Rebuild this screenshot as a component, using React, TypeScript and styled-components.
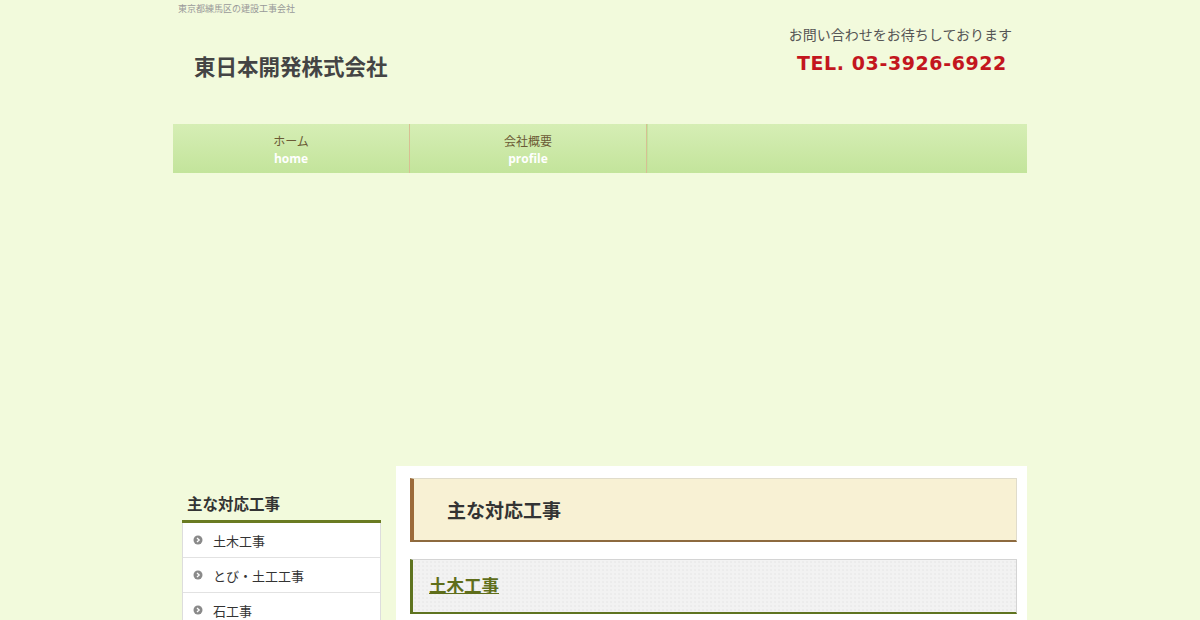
import styled, { createGlobalStyle } from "styled-components";

const GlobalStyle = createGlobalStyle`
  html, body {
    margin: 0;
    padding: 0;
    background: #f2fadc;
    font-family: "Noto Sans CJK JP", "Noto Sans", sans-serif;
    color: #333;
  }
`;

const Page = styled.div`
  width: 854px;
  margin: 0 auto;
`;

const Tagline = styled.p`
  margin: 0;
  padding: 2px 0 0 5px;
  font-size: 9px;
  line-height: 13px;
  color: #999;
`;

const Header = styled.header`
  display: flex;
  justify-content: space-between;
  align-items: flex-start;
  height: 109px;
`;

const SiteTitle = styled.h1`
  margin: 36px 0 0 21px;
  font-size: 21.5px;
  line-height: 30px;
  font-weight: 700;
  color: #444;
`;

const Contact = styled.div`
  display: flex;
  flex-direction: column;
  align-items: center;
  margin: 8px 15px 0 0;
`;

const ContactNote = styled.p`
  margin: 0;
  font-size: 14px;
  line-height: 22px;
  color: #555;
`;

const Tel = styled.p`
  margin: 5px 0 0 3px;
  font-family: "DejaVu Sans", Verdana, sans-serif;
  font-size: 19px;
  line-height: 26px;
  font-weight: 700;
  color: #c3161e;
  letter-spacing: 0.6px;
`;

const Nav = styled.nav`
  display: flex;
  height: 49px;
  background: linear-gradient(#d6eeb5, #c3e49b);
`;

const NavItem = styled.a<{ $empty?: boolean }>`
  width: 237px;
  box-sizing: border-box;
  padding-top: 3px;
  display: flex;
  flex-direction: column;
  align-items: center;
  justify-content: center;
  text-decoration: none;
  border-right: 1px solid #d7bf93;
  ${(p) => p.$empty && "flex: 1; border-right: none; border-left: 1px solid #bfe49a;"}
`;

const NavJa = styled.span`
  font-size: 12px;
  line-height: 18px;
  color: #6b5a35;
`;

const NavEn = styled.span`
  font-family: "Open Sans", "Noto Sans", sans-serif;
  font-size: 12px;
  line-height: 18px;
  font-weight: 700;
  color: #fff;
`;

const Hero = styled.div`
  height: 293px;
`;

const Body = styled.div`
  display: flex;
  align-items: flex-start;
  gap: 15px;
  padding-left: 9px;
`;

const Sidebar = styled.aside`
  width: 199px;
  padding-top: 24px;
`;

const SideTitle = styled.h3`
  margin: 0;
  padding: 0 0 4px 5px;
  font-size: 15.5px;
  line-height: 26px;
  font-weight: 700;
  color: #333;
  border-bottom: 3px solid #6a7b22;
`;

const SideList = styled.ul`
  margin: 0;
  padding: 0;
  list-style: none;
  background: #fff;
  border-left: 1px solid #ddd;
  border-right: 1px solid #ddd;
`;

const SideItem = styled.li`
  display: flex;
  align-items: center;
  gap: 10px;
  height: 34px;
  padding-left: 10px;
  font-size: 13px;
  color: #333;
  border-bottom: 1px solid #e2e2e2;
`;

const Bullet = () => (
  <svg width="10" height="10" viewBox="0 0 10 10">
    <circle cx="5" cy="5" r="4.5" fill="#8a8a8a" />
    <path d="M4 3 L6.2 5 L4 7" fill="none" stroke="#fff" strokeWidth="1.3" />
  </svg>
);

const Main = styled.main`
  flex: 1;
  background: #fff;
  padding: 12px 10px 0 14px;
  height: 154px;
`;

const PageHeading = styled.h2`
  margin: 0;
  height: 61px;
  display: flex;
  align-items: center;
  padding-left: 33px;
  font-size: 19px;
  font-weight: 700;
  color: #333;
  background: #f8f1d4;
  border: 1px solid #e0dccb;
  border-left: 4px solid #9c6b3a;
  border-bottom: 2px solid #8d6a3f;
`;

const SectionHeading = styled.h3`
  margin: 17px 0 0;
  height: 55px;
  box-sizing: border-box;
  display: flex;
  align-items: center;
  padding: 0 0 4px 16px;
  font-size: 17.5px;
  font-weight: 700;
  background-color: #f2f2f2;
  background-image: radial-gradient(#e4e4e4 0.6px, transparent 0.8px);
  background-size: 4px 4px;
  border: 1px solid #d4d4d4;
  border-left: 3px solid #5f7420;
  border-bottom: 2px solid #5f7420;

  a {
    color: #5f6e1a;
    text-decoration: underline;
  }
`;

const works = ["土木工事", "とび・土工工事", "石工事"];

export default function App() {
  return (
    <>
      <GlobalStyle />
      <Page>
        <Tagline>東京都練馬区の建設工事会社</Tagline>
        <Header>
          <SiteTitle>東日本開発株式会社</SiteTitle>
          <Contact>
            <ContactNote>お問い合わせをお待ちしております</ContactNote>
            <Tel>TEL. 03-3926-6922</Tel>
          </Contact>
        </Header>
        <Nav>
          <NavItem href="#">
            <NavJa>ホーム</NavJa>
            <NavEn>home</NavEn>
          </NavItem>
          <NavItem href="#">
            <NavJa>会社概要</NavJa>
            <NavEn>profile</NavEn>
          </NavItem>
          <NavItem $empty />
        </Nav>
        <Hero />
        <Body>
          <Sidebar>
            <SideTitle>主な対応工事</SideTitle>
            <SideList>
              {works.map((w) => (
                <SideItem key={w}>
                  <Bullet />
                  {w}
                </SideItem>
              ))}
            </SideList>
          </Sidebar>
          <Main>
            <PageHeading>主な対応工事</PageHeading>
            <SectionHeading>
              <a href="#">土木工事</a>
            </SectionHeading>
          </Main>
        </Body>
      </Page>
    </>
  );
}
